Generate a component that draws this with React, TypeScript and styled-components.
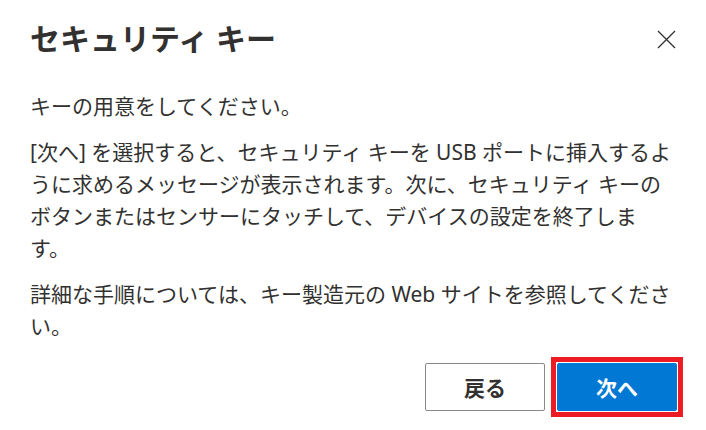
import React from "react";
import styled, { createGlobalStyle } from "styled-components";

const GlobalStyle = createGlobalStyle`
  html, body {
    margin: 0;
    padding: 0;
    background: #ffffff;
  }
  body {
    font-family: "Noto Sans", "Noto Sans CJK JP", sans-serif;
    color: #323130;
  }
`;

const Dialog = styled.div`
  width: 706px;
  height: 430px;
  box-sizing: border-box;
  padding: 20px 23px 0 30px;
  display: flex;
  flex-direction: column;
`;

const TitleRow = styled.div`
  display: flex;
  align-items: center;
  justify-content: space-between;
`;

const Title = styled.h1`
  margin: 0;
  font-size: 30px;
  line-height: 38px;
  font-weight: 700;
  color: #323130;
`;

const CloseButton = styled.button`
  border: none;
  background: transparent;
  padding: 0;
  width: 20px;
  height: 20px;
  margin-right: 7px;
  display: flex;
  align-items: center;
  justify-content: center;
  cursor: pointer;
`;

const Body = styled.div`
  margin-top: 32px;
  display: flex;
  flex-direction: column;
  gap: 14px;
`;

const Para = styled.p`
  margin: 0;
  font-size: 21px;
  line-height: 32px;
  color: #323130;
  white-space: nowrap;
`;

const Footer = styled.div`
  margin-top: 15px;
  display: flex;
  align-items: center;
  justify-content: flex-end;
  gap: 6px;
`;

const FocusFrame = styled.div`
  border: 5px solid #ed1c24;
  padding: 1px;
  display: flex;
`;

const Button = styled.button<{ $primary?: boolean }>`
  width: 120px;
  height: 48px;
  box-sizing: border-box;
  border-radius: 2px;
  font-family: "Noto Sans CJK JP", sans-serif;
  font-size: 21px;
  font-weight: 700;
  cursor: pointer;
  border: 1px solid ${(p) => (p.$primary ? "#0078d4" : "#8a8886")};
  background: ${(p) => (p.$primary ? "#0078d4" : "#ffffff")};
  color: ${(p) => (p.$primary ? "#ffffff" : "#323130")};
`;

const CloseIcon = () => (
  <svg width="19" height="19" viewBox="0 0 19 19">
    <path d="M1 1 L18 18 M18 1 L1 18" stroke="#323130" strokeWidth="1.3" fill="none" />
  </svg>
);

const App: React.FC = () => {
  return (
    <Dialog>
      <GlobalStyle />
      <TitleRow>
        <Title>セキュリティ キー</Title>
        <CloseButton aria-label="閉じる">
          <CloseIcon />
        </CloseButton>
      </TitleRow>
      <Body>
        <Para>キーの用意をしてください。</Para>
        <Para>
          [次へ] を選択すると、セキュリティ キーを USB ポートに挿入するよ
          <br />
          うに求めるメッセージが表示されます。次に、セキュリティ キーの
          <br />
          ボタンまたはセンサーにタッチして、デバイスの設定を終了しま
          <br />
          す。
        </Para>
        <Para>
          詳細な手順については、キー製造元の Web サイトを参照してくださ
          <br />
          い。
        </Para>
      </Body>
      <Footer>
        <Button>戻る</Button>
        <FocusFrame>
          <Button $primary>次へ</Button>
        </FocusFrame>
      </Footer>
    </Dialog>
  );
};

export default App;
